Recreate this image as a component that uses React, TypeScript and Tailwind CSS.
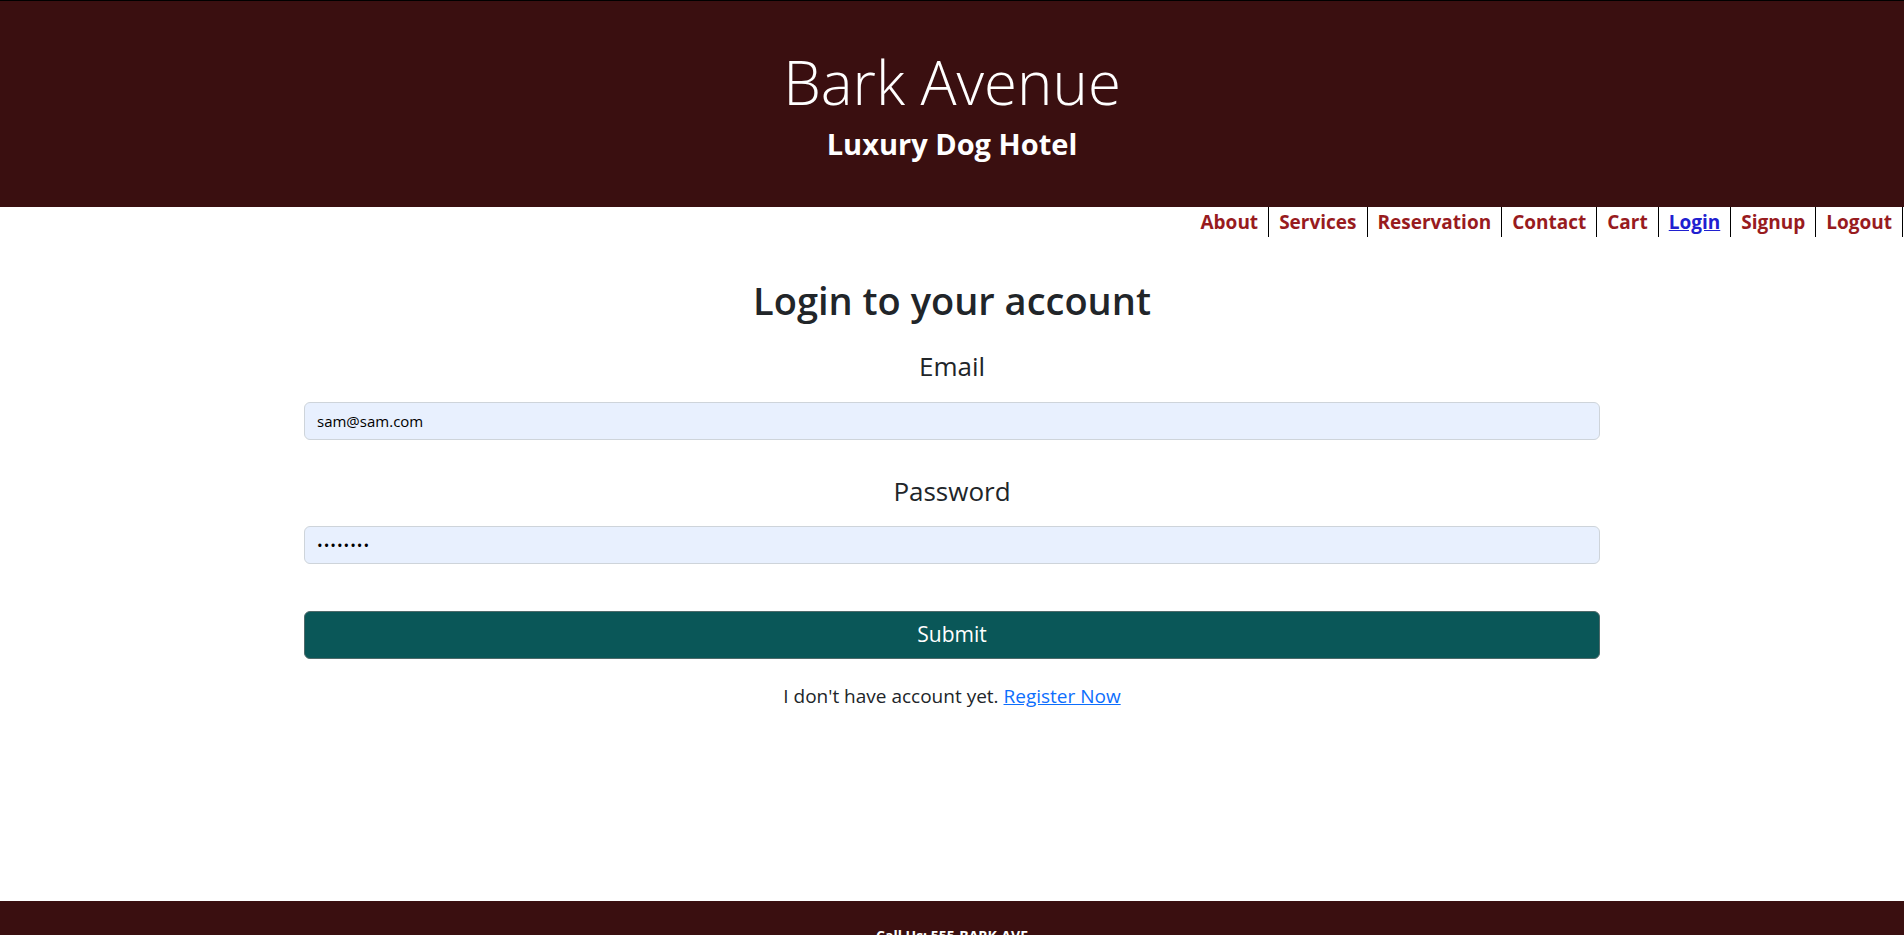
import React from "react";

const navItems = ["About", "Services", "Reservation", "Contact", "Cart", "Login", "Signup", "Logout"];

export default function App() {
  return (
    <div className="h-[935px] overflow-hidden bg-white text-[#212529] font-['Open_Sans',sans-serif]">
      <header className="h-[207px] bg-[#3a0f10] border-t border-black flex flex-col items-center justify-center text-white">
        <h1 className="text-[60px] font-light leading-[1.2]">Bark Avenue</h1>
        <h2 className="mt-[9px] text-[29px] font-bold leading-[1.2]">Luxury Dog Hotel</h2>
      </header>
      <nav className="h-[30px] flex justify-end pr-[1px]">
        {navItems.map((item) => (
          <a
            key={item}
            href="#"
            className={
              "px-[10px] h-full flex items-center text-[19px] font-bold leading-none border-r border-black " +
              (item === "Login" ? "text-[#2020d0] underline" : "text-[#981b1e] no-underline")
            }
          >
            {item}
          </a>
        ))}
      </nav>
      <main className="h-[664px]">
        <div className="w-[1296px] mx-auto flex flex-col items-center">
          <h2 className="mt-[41px] text-[38px] font-semibold leading-[1.2]">Login to your account</h2>
          <label className="mt-[27px] text-[26px] leading-[1.2]">Email</label>
          <div className="mt-[20px] w-full h-[38px] rounded-[6px] border border-[#ced4da] bg-[#e8f0fe] flex items-center px-[12px] text-[15px] text-black">
            sam@sam.com
          </div>
          <label className="mt-[36px] text-[26px] leading-[1.2]">Password</label>
          <div className="mt-[19px] w-full h-[38px] rounded-[6px] border border-[#ced4da] bg-[#e8f0fe] flex items-center px-[12px] text-[15px] text-black tracking-[1px]">
            ••••••••
          </div>
          <button className="mt-[47px] w-full h-[48px] rounded-[6px] border border-[#4f6a6a] bg-[#0a5758] text-white text-[21px] leading-none">
            Submit
          </button>
          <p className="mt-[23px] text-[19px] leading-[1.5]">
            I don't have account yet.{" "}
            <a href="#" className="text-[#0d6efd] underline">
              Register Now
            </a>
          </p>
        </div>
      </main>
      <footer className="h-[120px] bg-[#3a0f10] flex justify-center pt-[25px] text-white text-[14px] font-bold leading-[20px]">
        Call Us: 555-BARK-AVE
      </footer>
    </div>
  );
}
